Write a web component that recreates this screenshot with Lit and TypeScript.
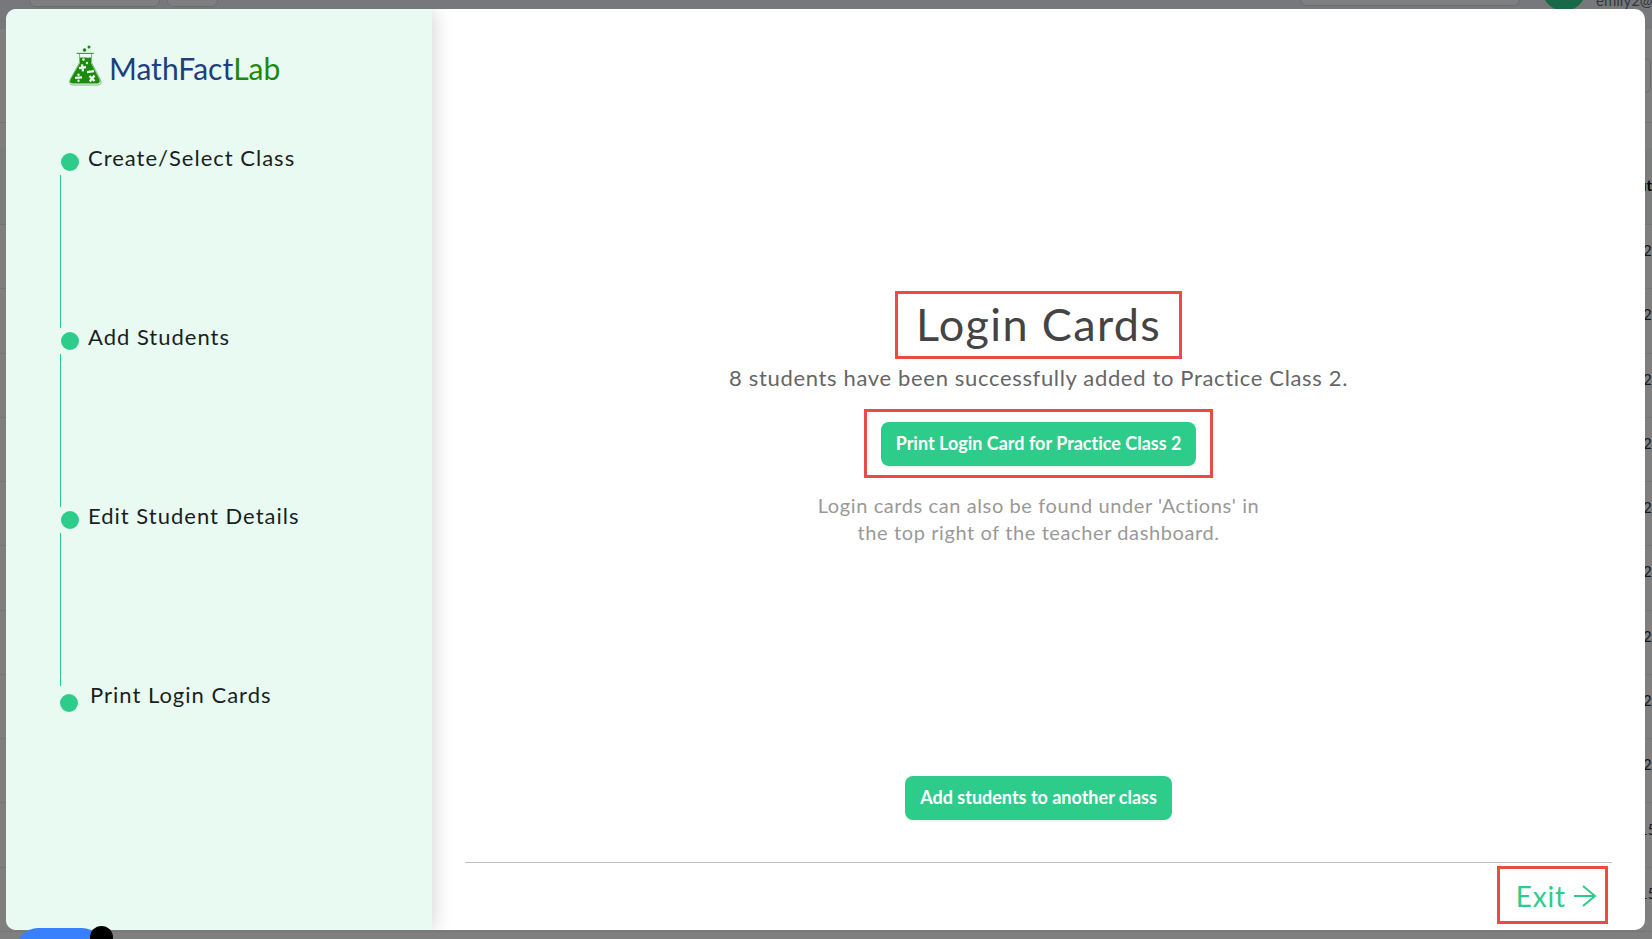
import { LitElement, html, css, svg } from "lit";
import { customElement, state } from "lit/decorators.js";
import { classMap } from "lit/directives/class-map.js";

const flask = svg`
  <circle cx="21" cy="2" r="1.5" fill="#1e8a0c"/>
  <circle cx="16.500" cy="5" r="1.8" fill="#1e8a0c"/>
  <path d="M9 8.500h17M11.500 8.500v9L2 35q-1.500 5 3 5h24.500q5 0 3-5L23.500 17.500v-9" fill="none" stroke="#7dba76" stroke-width="1"/>
  <path d="M8.500 8.300h17" stroke="#1e8a0c" stroke-width="1" opacity=".7"/>
  <path d="M12 12.500h11v5.500l8.500 16.500q1 4-2 4H5q-4 0-2.500-4l9.500-16.500z" fill="#1e8a0c"/>
  <g fill="#e8faf2">
    <circle cx="15.500" cy="14.500" r="1.300"/><circle cx="20" cy="11.500" r="1.200"/><circle cx="19" cy="18" r="1.200"/>
    <circle cx="10.500" cy="29.700" r="1.200"/><circle cx="10.500" cy="35.700" r="1.200"/>
  </g>
  <path d="M11 23.200l7-1M14 19.300l1 7M19 27.200l7-1M7 32.900l7-.6M21.500 31l5 5M26.500 30.500l-4.700 6" stroke="#e8faf2" stroke-width="2.300" fill="none"/>`;

@customElement("page-behind")
export class PageBehind extends LitElement {
  static styles = css`
    :host { display: flex; flex-direction: column; height: 100%; overflow: hidden; background: #7f7f7f;
      font: 15px "Lato", sans-serif; color: #14161a; }
    * { box-sizing: border-box; }
    .bar { flex: none; display: flex; height: 29px; padding-left: 29px; background: #76787b; align-items: flex-start; overflow: hidden; }
    .tab { width: 131px; height: 38px; margin-top: -31px; border: 1px solid #6c6d6f; border-radius: 6px; background: #7d7e7f; }
    .tab.small { width: 51px; margin-left: 7px; }
    .tab.wide { width: 220px; margin-left: auto; margin-top: -32px; }
    .avatar { width: 44px; height: 44px; border-radius: 50%; margin: -33px 10px 0 22px; background: #17694a; }
    .mail { width: 56px; margin-top: -10px; line-height: 20px; color: #33373d; white-space: nowrap; }
    .tools { flex: none; display: flex; justify-content: flex-end; height: 94px; padding: 29px 1px 0 0; border-bottom: 1px solid #737373; }
    .filter { width: 60px; height: 35px; border: 1px solid #6e6e6e; border-radius: 6px; }
    .head { flex: none; display: flex; justify-content: flex-end; align-items: center; height: 77px; margin-top: 25px; padding-bottom: 3px;
      background: #7b7c7c; border-bottom: 1px solid #747474; font-weight: 700; color: #000; }
    .rows { flex: 1; display: flex; flex-direction: column; padding-bottom: 7px; }
    .row { flex: 1; display: flex; justify-content: flex-end; align-items: center; padding-bottom: 13px; border-bottom: 1px solid #757575; }
    .cell { width: 9px; white-space: nowrap; }
    .cell.long { width: 13px; }
  `;
  render() {
    const values = [2, 2, 2, 2, 2, 2, 2, 2, 2, 15, 15];
    return html`
      <div class="bar">
        <span class="tab"></span><span class="tab small"></span>
        <span class="tab wide"></span><span class="avatar"></span><span class="mail">emily2@m</span>
      </div>
      <div class="tools"><span class="filter"></span></div>
      <div class="head">ut</div>
      <div class="rows">${values.map((v) => html`<div class="row"><span class=${classMap({ cell: true, long: v > 9 })}>${v}</span></div>`)}</div>`;
  }
}

@customElement("step-list")
export class StepList extends LitElement {
  @state() steps = ["Create/Select Class", "Add Students", "Edit Student Details", "Print Login Cards"];
  static styles = css`
    :host { display: block; }
    .steps { list-style: none; margin: 0; padding: 0; }
    .step { display: flex; flex-direction: column; height: 179px; }
    .title { flex: none; display: flex; align-items: flex-end; gap: 9px; height: 27px; padding-left: 1px;
      font-size: 22px; line-height: 30px; letter-spacing: 1px; color: #1b1f1e; }
    .label { align-self: flex-start; margin-top: -1px; }
    .dot { width: 18px; height: 18px; border-radius: 50%; background: #2ecc8b; }
    .line { flex: none; width: 1px; height: 153px; margin-top: 4px; background: #2ecc8b; }
    .step:last-child { height: auto; }
    .step:last-child .title { height: 31px; padding-left: 0; gap: 12px; }
  `;
  render() {
    return html`<ol class="steps">
      ${this.steps.map((s, i) => html`<li class="step">
        <div class="title"><span class="dot"></span><span class="label">${s}</span></div>
        ${i < this.steps.length - 1 ? html`<div class="line"></div>` : null}
      </li>`)}
    </ol>`;
  }
}

@customElement("app-root")
export class AppRoot extends LitElement {
  static styles = css`
    :host { display: grid; height: 100vh; overflow: hidden; position: relative; font-family: "Lato", sans-serif; }
    * { box-sizing: border-box; }
    .behind, .modal { grid-area: 1 / 1; min-height: 0; min-width: 0; }
    .modal { position: relative; display: flex; margin: 9px 7px 9px 6px; border-radius: 10px; background: #fff; overflow: hidden; }
    .side { flex: 0 0 26%; padding: 36px 54px 0; background: #e8faf2; box-shadow: 0 0 20px rgba(0, 0, 0, 0.2); }
    .logo { display: flex; align-items: flex-end; gap: 7px; height: 41px; padding-left: 8px; margin-bottom: 58px; }
    .flask { flex: none; width: 34px; height: 41px; }
    .brand { font-size: 30px; line-height: 36px; color: #1d3f7c; }
    .lab { color: #1e8a0c; }
    .main { flex: 1; display: flex; flex-direction: column; padding: 0 33px; min-width: 0; }
    .content { flex: 1; display: flex; flex-direction: column; align-items: center; padding-top: 282px; text-align: center; }
    .mark { border: 3px solid #e94b45; }
    .heading { margin: 0; padding: 4px 18px 5px; font-size: 45px; line-height: 53px; font-weight: 400; letter-spacing: 0.03em; color: #444; }
    .summary { margin: 5px 0 17px; font-size: 22px; line-height: 28px; letter-spacing: 0.03em; color: #666; }
    .print { padding: 10px 14px 9px; }
    .btn { display: block; height: 44px; padding: 0 15px 2px; border: 0; border-radius: 8px; background: #2ecc8b; color: #fff;
      font: 700 18px/24px "Lato", sans-serif; font-variant-ligatures: none;
      box-shadow: 0 2px 0 rgba(46, 204, 139, 0.08); }
    .hint { width: 460px; margin: 14px 0 0; font-size: 20px; line-height: 27px; letter-spacing: 0.03em; color: #999; }
    .again { margin: auto 0 42px; }
    .foot { display: flex; justify-content: flex-end; padding: 3px 4px 6px; border-top: 1px solid #bebebe; }
    .exit { display: flex; align-items: center; gap: 7px; height: 58px; padding: 2px 8px 0 16px; background: none; color: #2ecc8b;
      font: 400 28px/34px "Lato", sans-serif; letter-spacing: 0.03em; }
    .arrow { width: 24px; height: 24px; }
    .chat { position: absolute; left: 16px; bottom: -33px; width: 88px; height: 44px; border-radius: 22px; background: #3880ff; }
    .badge { position: absolute; right: -9px; top: -2px; width: 23px; height: 23px; border-radius: 50%; background: #000; }
  `;
  render() {
    return html`
      <page-behind class="behind" aria-hidden="true"></page-behind>
      <section class="modal" role="dialog" aria-labelledby="title">
        <aside class="side">
          <div class="logo">
            <svg class="flask" viewBox="0 0 34 41" aria-hidden="true">${flask}</svg>
            <span class="brand">MathFact<span class="lab">Lab</span></span>
          </div>
          <step-list></step-list>
        </aside>
        <main class="main">
          <div class="content">
            <h1 id="title" class="heading mark">Login Cards</h1>
            <p class="summary">8 students have been successfully added to Practice Class 2.</p>
            <div class="print mark"><button class="btn" type="button">Print Login Card for Practice Class 2</button></div>
            <p class="hint">Login cards can also be found under 'Actions' in the top right of the teacher dashboard.</p>
            <button class="btn again" type="button">Add students to another class</button>
          </div>
          <footer class="foot">
            <button class="exit mark" type="button">Exit
              <svg class="arrow" viewBox="0 0 24 24" fill="none" stroke="currentColor" stroke-width="2" aria-hidden="true">
                <path d="M1 12h21M10 2l12 10-12 10"/>
              </svg>
            </button>
          </footer>
        </main>
      </section>
      <div class="chat"><span class="badge"></span></div>`;
  }
}
